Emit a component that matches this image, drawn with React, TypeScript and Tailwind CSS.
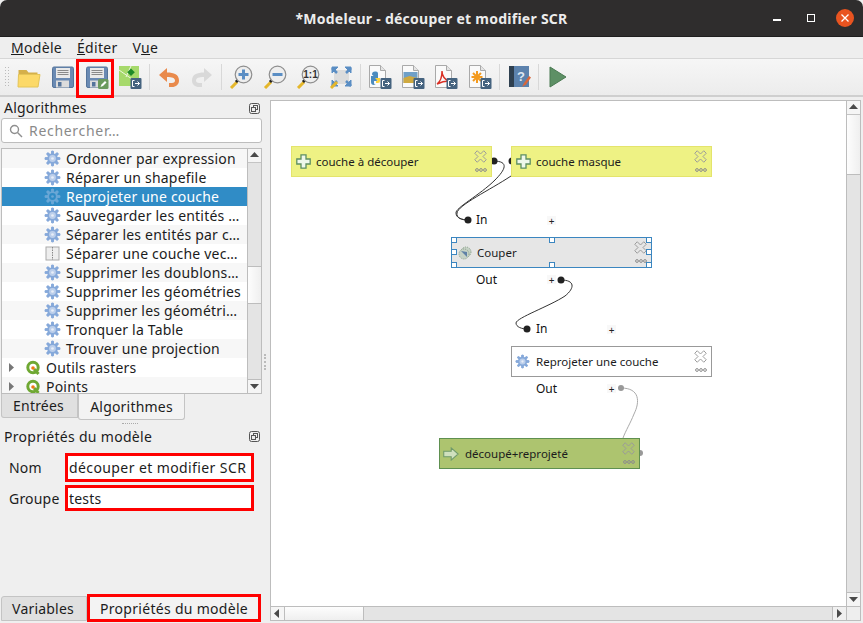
import React from "react";

const ff = { fontFamily: '"Noto Sans","Open Sans",sans-serif' };

function Gear({ size = 18, color = "#86a9da", inner = "#bccfeb", core = "#e8eef8", className = "" }: { size?: number; color?: string; inner?: string; core?: string; className?: string }) {
  const teeth = [0, 45, 90, 135, 180, 225, 270, 315];
  return (
    <svg width={size} height={size} viewBox="0 0 18 18" className={className}>
      {teeth.map((a) => (
        <rect key={a} x="7.6" y="0.8" width="2.8" height="16.4" rx="1" fill={color} transform={`rotate(${a} 9 9)`} />
      ))}
      <circle cx="9" cy="9" r="5.6" fill={color} />
      <circle cx="9" cy="9" r="3.6" fill={inner} />
      <circle cx="9" cy="9" r="1.4" fill={core} />
    </svg>
  );
}

function QIcon() {
  return (
    <svg width="16" height="16" viewBox="0 0 16 16">
      <circle cx="8" cy="7.5" r="5.2" fill="#fff" stroke="#6fa833" strokeWidth="3" />
      <path d="M9 9l4.500 5" stroke="#6fa833" strokeWidth="3" />
      <circle cx="8" cy="8" r="1.800" fill="#ee7913" />
    </svg>
  );
}

function Arrow({ dir }: { dir: "up" | "down" | "left" | "right" }) {
  const p = { up: "M1 7l4.500-5 4.500 5z", down: "M1 3l4.500 5 4.500-5z", left: "M7 1L2 5.500 7 10z", right: "M3 1l5 4.500L3 10z" }[dir];
  return (
    <svg width="11" height="11" viewBox="0 0 11 11">
      <path d={p} fill="#4a4a4a" />
    </svg>
  );
}

function Dock() {
  return (
    <svg width="11" height="11" viewBox="0 0 11 11" fill="none" stroke="#555">
      <rect x="0.5" y="0.5" width="10" height="10" rx="2" />
      <rect x="4.5" y="2.5" width="4" height="4" />
      <rect x="2.5" y="4.5" width="4" height="4" fill="#eee" />
    </svg>
  );
}

function Floppy({ pen }: { pen?: boolean }) {
  return (
    <svg width="24" height="24" viewBox="0 0 24 24">
      <path d="M3 2h18a1.500 1.500 0 0 1 1.500 1.500V21a1.500 1.500 0 0 1-1.500 1.500H3A1.500 1.500 0 0 1 1.500 21V3.500A1.500 1.500 0 0 1 3 2z" fill="#6a8ab3" stroke="#55749b" />
      <rect x="5" y="3" width="14" height="10" fill="#e9e9e9" />
      <path d="M6.500 5.500h11M6.500 7.500h11M6.500 9.500h11" stroke="#8a8a8a" />
      <rect x="5" y="15.500" width="13" height="7" fill="#dcdcdc" />
      <rect x="7" y="17" width="3.500" height="4.500" fill="#55749b" />
      {pen && (
        <g>
          <rect x="13" y="14" width="10.500" height="10" rx="1.500" fill="#6b9a5d" />
          <path d="M15.500 22l1-2.500 3.500-3.500 1.500 1.500-3.500 3.500z" fill="#fff" />
        </g>
      )}
    </svg>
  );
}

function Badge() {
  return (
    <g>
      <rect x="12.500" y="13" width="11" height="11" rx="1" fill="#45637f" />
      <path d="M16.500 15.500h-2v6h2" stroke="#fff" fill="none" />
      <path d="M17 18.500h4.500M19.500 16.500l2 2-2 2" stroke="#fff" fill="none" />
    </g>
  );
}

function Doc({ children }: { children?: React.ReactNode }) {
  return (
    <svg width="24" height="24" viewBox="0 0 24 24">
      <path d="M1.500 0.500h11l5 5v17h-16z" fill="#fafafa" stroke="#a9a9a9" />
      <path d="M12.500 0.500v5h5" fill="#e4e4e4" stroke="#a9a9a9" />
      {children}
      <Badge />
    </svg>
  );
}

function Magnifier({ children }: { children: React.ReactNode }) {
  return (
    <svg width="24" height="24" viewBox="0 0 24 24">
      <path d="M2 23l6-6" stroke="#e5b72b" strokeWidth="3" />
      <path d="M7 15l2 2" stroke="#222" strokeWidth="3" />
      <circle cx="14.500" cy="9.500" r="8.300" fill="#eeeeee" stroke="#8e8e8e" strokeWidth="1.200" />
      {children}
    </svg>
  );
}

const icons: { w: number; el: React.ReactNode; sep?: boolean }[] = [
  { w: 34, el: <svg width="24" height="24" viewBox="0 0 24 24"><path d="M1.500 5h8l2 2.500h9v4H1.500z" fill="#d5b04a" /><path d="M1 22L1.500 9.500H23L21 22z" fill="#fcd968" stroke="#e4c457" /></svg> },
  { w: 34, el: <Floppy /> },
  { w: 33, el: <Floppy pen /> },
  { w: 33, el: <svg width="24" height="24" viewBox="0 0 24 24"><rect x="1" y="1" width="20" height="20" fill="#a6d96b" /><path d="M1 5l20 14M13 1L8 12" stroke="#eef7df" /><path d="M13 3.500l3.800 3.800-3.800 3.800-3.800-3.800z" fill="#1e8a28" /><Badge /></svg> },
  { w: 6, sep: true, el: null },
  { w: 33, el: <svg width="24" height="24" viewBox="0 0 24 24"><path d="M2 10l8-7v4.500c7 0 12 2 12 8 0 4-3 6.500-7 6.500h-3v-4h3c2 0 3-1 3-2.500 0-2.500-3-3.500-8-3.500V17z" fill="#e98a4c" /></svg> },
  { w: 33, el: <svg width="24" height="24" viewBox="0 0 24 24"><path d="M22 10l-8-7v4.500C7 7.500 2 9.500 2 15.500c0 4 3 6.500 7 6.500h3v-4H9c-2 0-3-1-3-2.500C6 13 9 12 14 12v5z" fill="#d9d9d9" /></svg> },
  { w: 6, sep: true, el: null },
  { w: 34, el: <Magnifier><path d="M14.500 4.500v10M9.500 9.500h10" stroke="#5b8ec4" strokeWidth="3" /></Magnifier> },
  { w: 33, el: <Magnifier><path d="M9.500 9.500h10" stroke="#5b8ec4" strokeWidth="3" /></Magnifier> },
  { w: 33, el: <Magnifier><text x="14.500" y="13" textAnchor="middle" fontSize="10" fontWeight="700" fill="#333" style={{ fontFamily: '"Liberation Sans",sans-serif' }}>1:1</text></Magnifier> },
  { w: 33, el: <svg width="24" height="24" viewBox="0 0 24 24"><rect x="5" y="5" width="15" height="14" fill="#dcdcdc" /><path d="M3 2h6L3 8zM22 2h-6l6 6zM3 21h6l-6-6zM22 21h-6l6-6z" fill="#5b8ec4" stroke="#5b8ec4" /><path d="M3 3l5 5M22 3l-5 5M3 21l5-5M22 21l-5-5" stroke="#5b8ec4" strokeWidth="2.500" /><path d="M2 23l6-6" stroke="#e5b72b" strokeWidth="3" /></svg> },
  { w: 6, sep: true, el: null },
  { w: 33, el: <Doc><path d="M4 9.500a3 3 0 0 1 3-3h1a2 2 0 0 1 2 2v3H6" fill="#4b8bbe" /><path d="M3 11h7v3a2 2 0 0 1-2 2H6v2a2 2 0 0 0 2 2H6a3 3 0 0 1-3-3z" fill="#4b8bbe" /><path d="M7 13h5v3a2 2 0 0 1-2 2H8v-2h2z" fill="#ffd43b" /></Doc> },
  { w: 33, el: <Doc><rect x="2.500" y="7" width="14" height="11" fill="#6fa0c8" /><path d="M2.500 18v-5l6-2 8 2v5z" fill="#cfa93f" /></Doc> },
  { w: 34, el: <Doc><path d="M3 19c3-2 5-7 5-13 0 5 3 9 7 10-4 0-8 1-12 3z" fill="none" stroke="#d93025" strokeWidth="1.400" /></Doc> },
  { w: 33, el: <Doc><path d="M9 6v12M3.500 12h11M5 8l8 8M13 8l-8 8" stroke="#f39a1e" strokeWidth="2" /></Doc> },
  { w: 6, sep: true, el: null },
  { w: 33, el: <svg width="24" height="24" viewBox="0 0 24 24"><rect x="2" y="1" width="20" height="21" fill="#5c82ad" /><rect x="2" y="1" width="5" height="21" fill="#2f4050" /><text x="14" y="16" textAnchor="middle" fontSize="13" fontWeight="700" fill="#dfe8f2" style={{ fontFamily: '"Liberation Sans",sans-serif' }}>?</text><path d="M15 22l2-4 5-7 2 1.500-5 7z" fill="#d8663a" /></svg> },
  { w: 6, sep: true, el: null },
  { w: 33, el: <svg width="24" height="24" viewBox="0 0 24 24"><path d="M4 2l16 10L4 22z" fill="#5d9065" stroke="#4a7a52" /></svg> },
];

const rows = [
  "Ordonner par expression",
  "Réparer un shapefile",
  "Reprojeter une couche",
  "Sauvegarder les entités …",
  "Séparer les entités par c…",
  "Séparer une couche vec…",
  "Supprimer les doublons…",
  "Supprimer les géométries",
  "Supprimer les géométri…",
  "Tronquer la Table",
  "Trouver une projection",
];

function CloseMark() {
  return (
    <svg width="13" height="13" viewBox="0 0 12 12" className="absolute right-[4px] top-[3px]" fill="none">
      <path d="M3 .7L6 3.700 9 .7l2.300 2.300-3 3 3 3L9 11.300l-3-3-3 3L.7 9l3-3-3-3z" stroke="#9a9a9a" strokeWidth="0.900" />
    </svg>
  );
}

function More() {
  return (
    <svg width="12" height="4" viewBox="0 0 12 4" className="absolute right-[4px] bottom-[4px]" fill="none" stroke="#8c8c8c">
      <circle cx="2" cy="2" r="1.400" />
      <circle cx="6" cy="2" r="1.400" />
      <circle cx="10" cy="2" r="1.400" />
    </svg>
  );
}

function Plus() {
  return (
    <svg width="15" height="15" viewBox="0 0 15 15">
      <path d="M5 .8h5v4.200h4.200v5H10v4.200H5V10H.8V5H5z" fill="#eef7ea" stroke="#5e8f60" strokeWidth="1.300" />
    </svg>
  );
}

function Handle({ cls }: { cls: string }) {
  return <div className={`absolute w-[6px] h-[6px] bg-white border border-[#3b86c0] ${cls}`} />;
}

function Link({ cls, text }: { cls: string; text: string }) {
  return <div className={`absolute text-[12px] leading-[16px] text-[#111] ${cls}`}>{text}</div>;
}

function PlusMini({ cls }: { cls: string }) {
  return <div className={`absolute w-[9px] h-[9px] flex items-center justify-center text-[10px] leading-none text-[#222] bg-[#f8f8f8] ${cls}`}>+</div>;
}

export default function App() {
  return (
    <div className="w-[863px] h-[623px] overflow-hidden flex flex-col bg-[#efefef] text-[#1c1c1c]" style={ff}>
      {/* title bar */}
      <div className="h-[37px] shrink-0 rounded-t-[7px] bg-[#2f2d2d] border-b border-[#1f1e1e] relative flex items-center justify-center text-[14px] font-bold text-[#ececec]">
        <span className="tracking-[0.25px]">*Modeleur - découper et modifier SCR</span>
        <div className="absolute right-[9px] top-0 h-full flex items-center">
          <div className="w-[8px] h-[2px] bg-white mt-[4px]" />
          <div className="w-[8px] h-[8px] border-[1.5px] border-white ml-[26px]" />
          <div className="ml-[21px] w-[18px] h-[18px] rounded-full bg-[#e95420] flex items-center justify-center">
            <svg width="8" height="8" viewBox="0 0 8 8"><path d="M.5.5l7 7M7.500.5l-7 7" stroke="#fff" strokeWidth="1.300" /></svg>
          </div>
        </div>
      </div>
      {/* menu */}
      <div className="h-[22px] shrink-0 flex items-center pl-[11px] gap-[15px] text-[14px] tracking-[0.3px] bg-[#eeeeee] border-b border-[#d6d6d6]">
        <span><u>M</u>odèle</span>
        <span><u>É</u>diter</span>
        <span>V<u>u</u>e</span>
      </div>
      {/* toolbar */}
      <div className="h-[38px] shrink-0 flex items-center pl-[4px] bg-gradient-to-b from-[#f6f6f6] to-[#ececec] border-b-2 border-[#cfcfcf] relative">
        <div className="w-[7px] h-[22px] mr-[1px] bg-[radial-gradient(#bbb_1px,transparent_1px)] bg-[length:3px_3px]" />
        {icons.map((ic, i) =>
          ic.sep ? (
            <div key={i} className="flex justify-center" style={{ width: ic.w }}>
              <div className="w-px h-[26px] bg-[#d8d8d8]" />
            </div>
          ) : (
            <div key={i} className="flex justify-center" style={{ width: ic.w }}>
              {ic.el}
            </div>
          )
        )}
        <div className="absolute left-[76px] top-0 w-[38px] h-[39px] border-[3px] border-[#ff0000]" />
      </div>

      <div className="flex-1 min-h-0 flex">
        {/* left */}
        <div className="w-[270px] shrink-0 flex flex-col text-[14px] tracking-[0.2px] relative">
          <div className="absolute left-[264px] top-[257px] w-[2px] h-[16px] border-l-2 border-dotted border-[#bbb]" />
          <div className="h-[21px] shrink-0 pl-[4px] pr-[10px] flex items-center justify-between leading-none pt-[1px]">
            <span>Algorithmes</span>
            <Dock />
          </div>
          <div className="h-[25px] ml-[1px] w-[261px] shrink-0 bg-white border border-[#bdbdbd] rounded-[3px] flex items-center pl-[7px] gap-[6px] text-[#8a8a8a]">
            <svg width="14" height="14" viewBox="0 0 14 14" fill="none" stroke="#8f8f8f" strokeWidth="1.400"><circle cx="5.500" cy="5.500" r="4" /><path d="M8.500 8.500l4.500 4.500" /></svg>
            <span className="tracking-[0.7px]">Rechercher…</span>
          </div>
          <div className="h-[246px] mt-[5px] ml-[1px] w-[261px] shrink-0 bg-white border border-[#bdbdbd] flex overflow-hidden">
            <div className="flex-1 min-w-0 overflow-hidden">
              {rows.map((r, i) => (
                <div key={r} className={`h-[19px] flex items-center pl-[42px] gap-[5px] whitespace-nowrap ${i === 2 ? "bg-[#308cc6] text-white" : i % 2 === 0 ? "bg-[#f7f7f7]" : "bg-white"}`}>
                  {i === 5 ? (
                    <svg width="17" height="17" viewBox="0 0 17 17" className="shrink-0"><rect x="2" y="2" width="13" height="13" fill="#eee" stroke="#aaa" /><path d="M8.500 2v13" stroke="#888" strokeDasharray="1.500 1" /></svg>
                  ) : i === 2 ? (
                    <Gear size={17} color="#6aa7d6" inner="#308cc6" core="#6aa7d6" className="shrink-0" />
                  ) : (
                    <Gear size={17} className="shrink-0" />
                  )}
                  <span>{r}</span>
                </div>
              ))}
              {["Outils rasters", "Points"].map((r, i) => (
                <div key={r} className={`h-[19px] flex items-center whitespace-nowrap ${i === 1 ? "bg-[#f7f7f7]" : "bg-white"}`}>
                  <div className="w-[23px] pl-[6px] shrink-0"><svg width="7" height="9" viewBox="0 0 7 9"><path d="M1 0l5 4.500L1 9z" fill="#777" /></svg></div>
                  <QIcon />
                  <span className="ml-[5px]">{r}</span>
                </div>
              ))}
            </div>
            <div className="w-[14px] shrink-0 border-l border-[#bdbdbd] flex flex-col bg-[#e4e4e4]">
              <div className="h-[14px] bg-[#f5f5f5] border-b border-[#c4c4c4] flex items-center justify-center"><Arrow dir="up" /></div>
              <div className="h-[103px]" />
              <div className="h-[38px] bg-gradient-to-r from-[#fdfdfd] to-[#efefef] border-y border-[#bdbdbd]" />
              <div className="flex-1" />
              <div className="h-[14px] bg-[#f5f5f5] border-t border-[#bdbdbd] flex items-center justify-center"><Arrow dir="down" /></div>
            </div>
          </div>
          {/* tabs */}
          <div className="h-[26px] shrink-0 flex items-start">
            <div className="w-[77px] ml-[1px] h-[24px] bg-[#e0e0e0] border border-t-0 border-[#c4c4c4] rounded-bl-[3px] flex items-center justify-center pr-[2px]">Entrées</div>
            <div className="w-[107px] h-[26px] bg-[#f3f3f3] border border-t-0 border-[#c4c4c4] rounded-b-[3px] flex items-center justify-center">Algorithmes</div>
          </div>
          <div className="h-[6px] shrink-0 flex justify-center items-center pr-[10px]">
            <div className="w-[16px] h-px border-t border-dotted border-[#aaa]" />
          </div>
          <div className="h-[21px] shrink-0 pl-[4px] pr-[10px] flex items-center justify-between leading-none">
            <span className="tracking-[0.3px]">Propriétés du modèle</span>
            <Dock />
          </div>
          <div className="grid grid-cols-[56px_189px] ml-[9px] mt-[6px] gap-y-[3px] items-center">
            <span>Nom</span>
            <div className="h-[29px] bg-white border-[3px] border-[#ff0000] flex items-center pl-[1px] whitespace-nowrap overflow-hidden tracking-[0.4px]">découper et modifier SCR</div>
            <span>Groupe</span>
            <div className="h-[26px] bg-white border-[3px] border-[#ff0000] flex items-center pl-[1px]">tests</div>
          </div>
          <div className="flex-1" />
          <div className="h-[28px] shrink-0 flex items-end mb-[1px]">
            <div className="w-[86px] ml-[1px] h-[25px] mb-[1px] bg-[#e0e0e0] border border-b border-[#c4c4c4] rounded-tl-[3px] flex items-center justify-center pr-[2px]">Variables</div>
            <div className="w-[174px] h-[28px] bg-[#f3f3f3] border-[3px] border-[#ff0000] flex items-center justify-center tracking-[0.3px]">Propriétés du modèle</div>
          </div>
        </div>

        {/* canvas */}
        <div className="w-[591px] mt-[3px] mb-[2px] border border-[#bdbdbd] flex flex-col bg-white">
          <div className="flex-1 min-h-0 flex">
            <div className="flex-1 relative overflow-hidden bg-white">
              <svg className="absolute left-0 top-0" width="575" height="505" viewBox="271 101 575 505" fill="none">
                <path d="M493 161C510 161 505 170 495 180C480 195 455 208 456 213C456 218 462 220 468 220" stroke="#333" />
                <path d="M511 176C490 190 458 205 457 213C456 218 462 220 468 220" stroke="#333" />
                <path d="M561 280C575 280 575 288 565 296C550 306 516 318 516 323C516 327 522 329 527 329" stroke="#333" />
                <path d="M621 388C640 388 640 402 634 414C630 424 626 430 623 438" stroke="#aaa" />
                <circle cx="494" cy="161" r="3.500" fill="#222" />
                <circle cx="512" cy="161" r="3.500" fill="#222" />
                <circle cx="468" cy="220" r="3.500" fill="#222" />
                <circle cx="561" cy="280" r="3.500" fill="#222" />
                <circle cx="527" cy="329" r="3.500" fill="#222" />
                <circle cx="621" cy="388" r="3" fill="#999" />
                <circle cx="640" cy="453" r="3" fill="#999" />
              </svg>

              <div className="absolute left-[20px] top-[45px] w-[201px] h-[31px] bg-[#eef284] border border-[#e4e46c] flex items-center pl-[4px] text-[11.5px]">
                <Plus /><span className="ml-[5px]">couche à découper</span><CloseMark /><More />
              </div>
              <div className="absolute left-[240px] top-[45px] w-[201px] h-[31px] bg-[#eef284] border border-[#e4e46c] flex items-center pl-[4px] text-[11.5px]">
                <Plus /><span className="ml-[5px]">couche masque</span><CloseMark /><More />
              </div>

              <Link cls="left-[205px] top-[111px]" text="In" />
              <PlusMini cls="left-[276px] top-[115px]" />
              <div className="absolute left-[180px] top-[136px] w-[201px] h-[31px] bg-[#e6e6e6] border border-[#3b86c0] flex items-center pl-[4px] text-[11.5px]">
                <svg width="14" height="14" viewBox="0 0 14 14" className="ml-[2px]"><circle cx="8" cy="6" r="5" fill="#c6d2c6" stroke="#8aa08a" strokeDasharray="1 1" /><circle cx="6" cy="8" r="5" fill="#c6d2c6" stroke="#8aa08a" strokeDasharray="1 1" /><path d="M3 5l6 1v5z" fill="#5f80a6" /></svg>
                <span className="ml-[5px]">Couper</span><CloseMark /><More />
                <Handle cls="-left-[1px] -top-[1px]" /><Handle cls="left-[97px] -top-[1px]" /><Handle cls="-right-[1px] -top-[1px]" />
                <Handle cls="-left-[1px] top-[11px]" /><Handle cls="-right-[1px] top-[11px]" />
                <Handle cls="-left-[1px] -bottom-[1px]" /><Handle cls="left-[97px] -bottom-[1px]" /><Handle cls="-right-[1px] -bottom-[1px]" />
              </div>
              <Link cls="left-[205px] top-[171px]" text="Out" />
              <PlusMini cls="left-[276px] top-[174px]" />

              <Link cls="left-[265px] top-[220px]" text="In" />
              <PlusMini cls="left-[336px] top-[224px]" />
              <div className="absolute left-[240px] top-[245px] w-[201px] h-[31px] bg-white border border-[#999] flex items-center pl-[3px] text-[11.5px]">
                <Gear size={15} /><span className="ml-[6px]">Reprojeter une couche</span><CloseMark /><More />
              </div>
              <Link cls="left-[265px] top-[280px]" text="Out" />
              <PlusMini cls="left-[336px] top-[283px]" />

              <div className="absolute left-[168px] top-[337px] w-[201px] h-[31px] bg-[#adc46f] border border-[#5f9050] flex items-center pl-[3px] text-[11.5px]">
                <svg width="16" height="14" viewBox="0 0 15 13"><path d="M.7 4h7V.8l6.500 5.700-6.500 5.700V9h-7z" fill="#cfe0bd" stroke="#6f9a6a" /></svg>
                <span className="ml-[6px]">découpé+reprojeté</span><CloseMark /><More />
              </div>
            </div>
            <div className="w-[14px] shrink-0 border-l border-[#bdbdbd] flex flex-col bg-[#e4e4e4]">
              <div className="h-[14px] bg-[#f5f5f5] border-b border-[#c4c4c4] flex items-center justify-center"><Arrow dir="up" /></div>
              <div className="h-[60px] bg-gradient-to-r from-[#fdfdfd] to-[#efefef] border-b border-[#bdbdbd]" />
              <div className="flex-1" />
              <div className="h-[14px] bg-[#f5f5f5] border-t border-[#bdbdbd] flex items-center justify-center"><Arrow dir="down" /></div>
            </div>
          </div>
          <div className="h-[14px] shrink-0 flex border-t border-[#bdbdbd] bg-[#e4e4e4]">
            <div className="w-[14px] bg-[#f5f5f5] border-r border-[#bdbdbd] flex items-center justify-center"><Arrow dir="left" /></div>
            <div className="w-[79px] bg-gradient-to-b from-[#fdfdfd] to-[#efefef] border-r border-[#bdbdbd]" />
            <div className="flex-1" />
            <div className="w-[14px] bg-[#f0f0f0] border-l border-[#bdbdbd] flex items-center justify-center"><Arrow dir="right" /></div>
            <div className="w-[14px] bg-[#eeeeee] border-l border-[#bdbdbd]" />
          </div>
        </div>
      </div>
    </div>
  );
}
